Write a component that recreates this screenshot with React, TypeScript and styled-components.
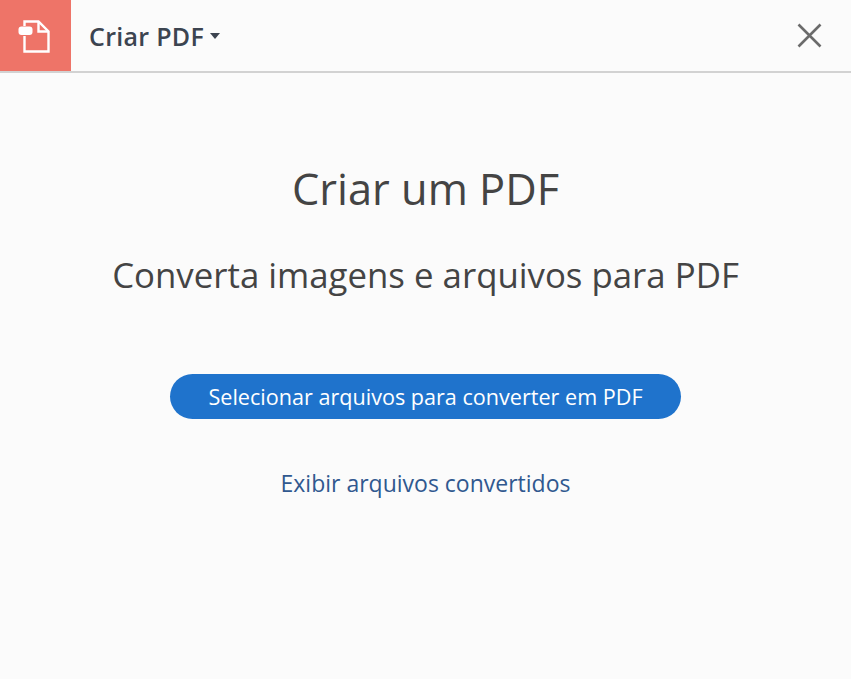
import React from 'react';
import styled, { createGlobalStyle } from 'styled-components';

const GlobalStyle = createGlobalStyle`
  html, body {
    margin: 0;
    padding: 0;
    background: #fbfbfb;
  }
`;

const Page = styled.div`
  width: 851px;
  height: 679px;
  display: flex;
  flex-direction: column;
  background: #fbfbfb;
  font-family: "Open Sans", "Noto Sans", sans-serif;
  overflow: hidden;
`;

const Header = styled.header`
  height: 71px;
  display: flex;
  align-items: center;
  border-bottom: 2px solid #d2d2d2;
  flex-shrink: 0;
`;

const IconTile = styled.div`
  width: 71px;
  height: 71px;
  background: #ee7468;
  display: flex;
  align-items: center;
  justify-content: center;
`;

const ToolMenu = styled.div`
  margin-left: 18px;
  display: flex;
  align-items: center;
  gap: 6px;
  font-size: 25px;
  font-weight: 600;
  letter-spacing: 0.3px;
  color: #3c4450;
`;

const Caret = styled.span`
  width: 0;
  height: 0;
  border-left: 5.5px solid transparent;
  border-right: 5.5px solid transparent;
  border-top: 6px solid #3c4450;
`;

const CloseButton = styled.button`
  margin-left: auto;
  margin-right: 29px;
  padding: 0;
  border: 0;
  background: none;
  display: flex;
`;

const Body = styled.main`
  display: flex;
  flex-direction: column;
  align-items: center;
  color: #444444;
`;

const Title = styled.h1`
  margin: 87px 0 0;
  font-size: 43.4px;
  font-weight: 400;
  line-height: 58px;
`;

const Subtitle = styled.h2`
  margin: 34px 0 0;
  font-size: 34.8px;
  font-weight: 400;
  line-height: 46px;
`;

const PrimaryButton = styled.button`
  margin-top: 76px;
  width: 511px;
  height: 45px;
  padding: 0;
  border: 0;
  border-radius: 23px;
  background: #1f73cc;
  color: #ffffff;
  font-family: inherit;
  font-size: 21.6px;
`;

const LinkText = styled.a`
  margin-top: 49px;
  font-size: 23px;
  line-height: 30px;
  color: #30588f;
`;

export default function App() {
  return (
    <Page>
      <GlobalStyle />
      <Header>
        <IconTile>
          <svg width="36" height="36" viewBox="0 0 36 36" fill="none">
            <path d="M6.5 8V3.5h14L30.5 13.5v20h-24V18" stroke="#fff" strokeWidth="2.4" />
            <path d="M20.5 3.5v10h10" stroke="#fff" strokeWidth="2.4" />
            <rect x="0.5" y="8.5" width="14" height="8.5" rx="3" fill="#fff" />
          </svg>
        </IconTile>
        <ToolMenu>
          Criar PDF
          <Caret />
        </ToolMenu>
        <CloseButton aria-label="Fechar">
          <svg width="25" height="25" viewBox="0 0 25 25" stroke="#6b6b6b" strokeWidth="2.6">
            <path d="M1.5 1.5l22 22M23.5 1.5l-22 22" />
          </svg>
        </CloseButton>
      </Header>
      <Body>
        <Title>Criar um PDF</Title>
        <Subtitle>Converta imagens e arquivos para PDF</Subtitle>
        <PrimaryButton>Selecionar arquivos para converter em PDF</PrimaryButton>
        <LinkText>Exibir arquivos convertidos</LinkText>
      </Body>
    </Page>
  );
}
